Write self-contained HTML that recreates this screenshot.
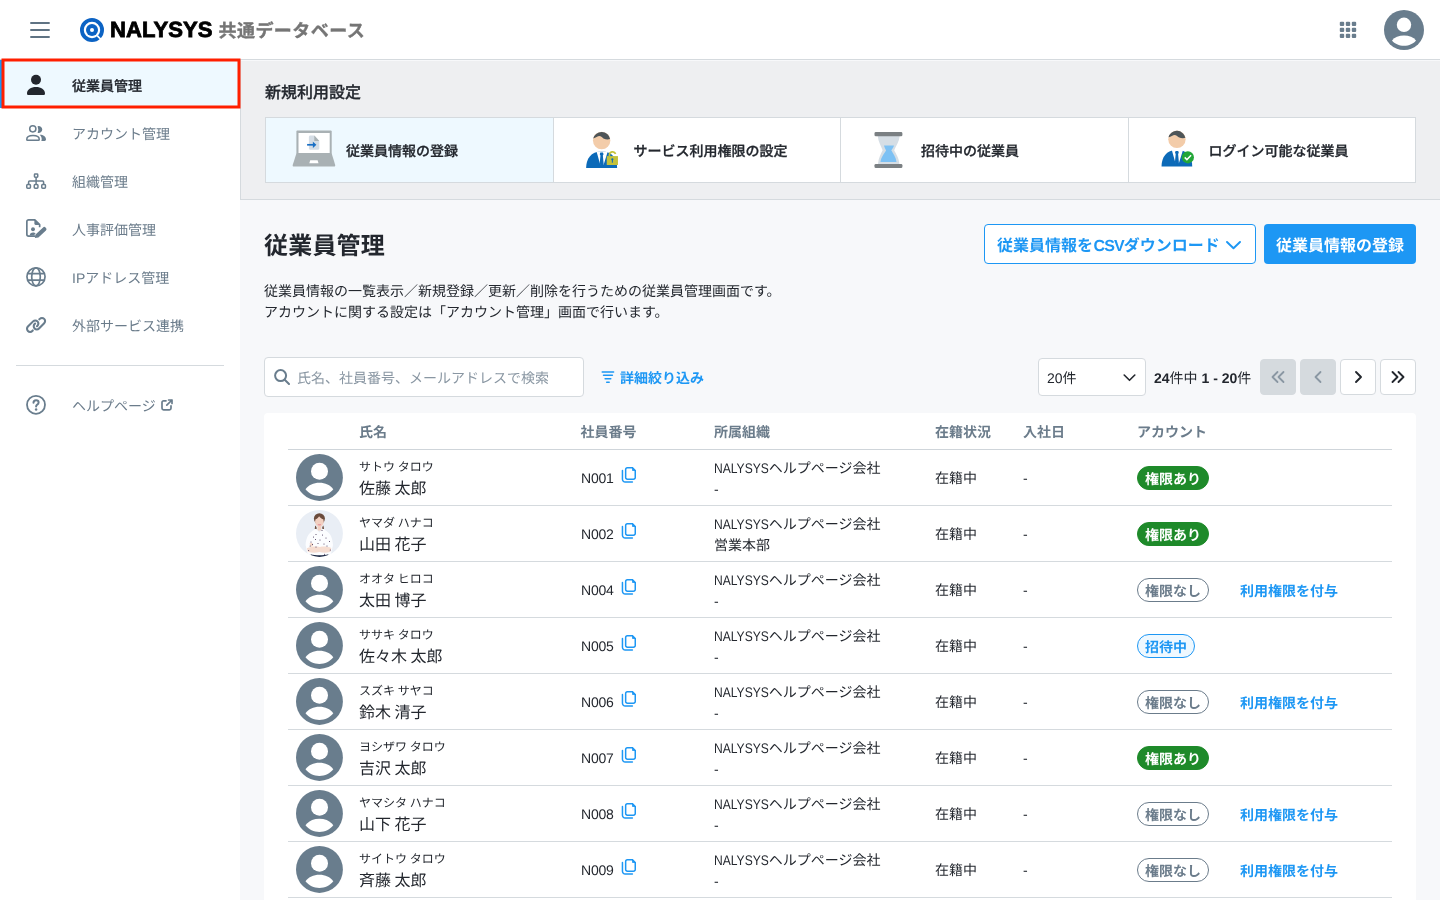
<!DOCTYPE html>
<html lang="ja">
<head>
<meta charset="utf-8">
<title>NALYSYS 共通データベース - 従業員管理</title>
<style>
*{box-sizing:border-box;margin:0;padding:0}
html,body{width:1440px;height:900px;overflow:hidden;background:#f7f8fa}
body{font-family:"Liberation Sans","Noto Sans CJK JP",sans-serif;font-size:14px;line-height:21px;color:#23272e;position:relative;-webkit-font-smoothing:antialiased;text-rendering:geometricPrecision}
a{text-decoration:none;color:inherit}
svg{display:block}
/* header */
#hdr,#side,#main{will-change:transform}
#hdr{position:absolute;left:0;top:0;width:1440px;height:60px;background:#fff;border-bottom:1px solid #d5dade;z-index:3}
#burger{position:absolute;left:30px;top:22px;width:20px;height:16px}
#logo{position:absolute;left:80px;top:18px;width:24px;height:24px}
#brand{position:absolute;left:110px;top:0;height:60px;line-height:60px;font-weight:700;font-size:22px;color:#000;white-space:nowrap;-webkit-text-stroke:.8px #000;transform:scaleX(1.005);transform-origin:0 50%}
#prod{position:absolute;left:218.5px;top:2px;height:59px;line-height:59px;font-weight:700;font-size:18px;color:#757575;white-space:nowrap;letter-spacing:.45px;-webkit-text-stroke:.35px #757575}
#apps{position:absolute;left:1339px;top:21px;width:18px;height:18px}
#me{position:absolute;left:1384px;top:10px;width:40px;height:40px}
/* sidebar */
#side{position:absolute;left:0;top:60px;width:240px;height:840px;background:#fff;z-index:2}
.nav{position:absolute;left:0;width:240px;height:48px;color:#6b7c8b}
.nav .ic{position:absolute;left:24px;top:12px;width:24px;height:24px}
.nav .tx{position:absolute;left:72px;top:2px;line-height:48px;font-size:14px;white-space:nowrap}
.nav .ext{position:absolute;left:161px;top:19px;width:12px;height:12px}
.nav.on{background:#eef9ff;color:#23272e}
.nav.on .tx{font-weight:500;-webkit-text-stroke:.3px #23272e}
.nav.on:before{content:"";position:absolute;left:0;top:0;width:3px;height:48px;background:#1d97f4}
#hl{position:absolute;left:0;top:56px;width:246px;height:56px;z-index:6;pointer-events:none}
#sep{position:absolute;left:16px;top:305px;width:208px;height:1px;background:#d5dade}
/* main */
#main{position:absolute;left:240px;top:60px;width:1200px;height:840px;background:#f7f8fa}
#wrap{position:absolute;left:1px;top:0;width:1199px;height:840px}

#sec{position:absolute;left:0;top:0;width:1200px;height:140px;background:#eeeff1;border-bottom:1px solid #d5dade;border-left:1px solid #d5dade;box-shadow:inset 0 1px 0 #f7f8fa}
#sec h2{position:absolute;left:24px;top:22px;font-size:16px;line-height:24px;font-weight:500;color:#23272e;-webkit-text-stroke:.3px #23272e}
#cards{position:absolute;left:24px;top:57px;width:1151px;height:66px;border:1px solid #d5dade;background:#fff;display:flex}
.card{flex:1 1 0;height:64px;border-left:1px solid #d5dade;position:relative;background:#fff}
.card:first-child{border-left:0;background:#eef9ff}
.card .ci{position:absolute;left:0;top:0;width:80px;height:64px}
.card .ct{position:absolute;left:80px;top:1px;line-height:64px;font-size:14px;font-weight:500;white-space:nowrap;color:#23272e;-webkit-text-stroke:.3px #23272e}
h1{position:absolute;left:23px;top:169px;font-size:24px;line-height:36px;font-weight:700;letter-spacing:.2px;color:#23272e;white-space:nowrap}
.btn{position:absolute;top:164px;height:40px;border-radius:4px;font-size:16px;font-weight:700;line-height:38px;white-space:nowrap;text-align:center;padding-top:3px}
#b1{left:743px;width:272px;border:1px solid #1d97f4;background:#fff;color:#1d97f4;text-align:left;padding-left:12px}
#b1 svg{position:absolute;left:240.800px;top:16.300px;width:16px;height:10px}
#b2{left:1023px;width:152px;background:#1d97f4;color:#fff;line-height:40px}
#desc{position:absolute;left:23px;top:221px;font-size:14px;line-height:21px;color:#23272e;white-space:nowrap}
#search{position:absolute;left:23px;top:297px;width:320px;height:40px;border:1px solid #d5dade;border-radius:4px;background:#fff}
#search svg{position:absolute;left:9.300px;top:11.300px;width:16px;height:16px}
#search span{position:absolute;left:32px;top:1px;line-height:38px;font-size:14px;color:#8a97a3;white-space:nowrap}
#filter{position:absolute;left:360px;top:298px;height:40px;line-height:40px;font-size:14px;font-weight:700;color:#1d97f4;white-space:nowrap;padding-left:19px}
#filter svg{position:absolute;left:0;top:13px;width:14px;height:12px;overflow:visible}
#sel{position:absolute;left:797px;top:298px;width:108px;height:38px;border:1px solid #d5dade;border-radius:4px;background:#fff;font-size:14px;line-height:36px;padding-left:8px;padding-top:1px}
#sel svg{position:absolute;left:84px;top:15px;width:13px;height:8px}
#cnt{position:absolute;left:913px;top:298px;height:40px;line-height:40px;font-size:14px;white-space:nowrap;color:#23272e}
#cnt b{font-weight:700}
.pg{position:absolute;top:299px;width:36px;height:36px;border-radius:4px;border:1px solid #d5dade;background:#fff}
.pg.dis{background:#d5dade;border-color:#d5dade}
.pg svg{position:absolute;left:9px;top:9px;width:16px;height:16px}
#tbl{position:absolute;left:23px;top:353px;width:1152px;height:520px;background:#fff;border-radius:4px}
.th{position:absolute;top:1px;height:36px;line-height:37px;font-size:14px;font-weight:700;color:#6b7c8b;white-space:nowrap}
#thl{position:absolute;left:24px;top:36px;width:1104px;height:1px;background:#cfd5da}
.tr{position:absolute;left:24px;width:1104px;height:56px;border-bottom:1px solid #d5dade}
.tr>*{position:absolute;white-space:nowrap}
.av{left:8px;top:4px;width:48px;height:48px}
.kn{left:71px;top:8px;font-size:12px;line-height:18px;word-spacing:-.6px}
.nm{left:71px;top:28px;font-size:16px;line-height:24px;word-spacing:-.9px}
.no{left:293px;top:18px;font-size:14px;line-height:21px;letter-spacing:-.2px}
.cp{left:332px;top:17px;width:16px;height:18px}
.og{left:426px;top:8px;font-size:14px;line-height:21px}
.la{display:inline-block;transform:scaleX(.862);transform-origin:0 50%;margin-right:-8.800px}
.st{left:647px;top:18px;font-size:14px;line-height:21px}
.dt{left:735px;top:18px;font-size:14px;line-height:21px}
.bd{left:849px;top:16px;height:24px;border-radius:12px;font-size:14px;font-weight:700;line-height:24px;padding:0 7px;border:1px solid}
.bd.ok{background:#1e8a2a;border-color:#1e8a2a;color:#fff}
.bd.ng{background:#fff;border-color:#6b7c8b;color:#6b7c8b}
.bd.iv{background:#eef8ff;border-color:#1d97f4;color:#1d97f4}
.lk{left:952px;top:19px;font-size:14px;line-height:21px;font-weight:700;color:#1d97f4}
</style>
</head>
<body>
<div id="hdr">
  <svg id="burger" viewBox="0 0 20 16"><path d="M1 1h18M1 8h18M1 15h18" stroke="#5f7383" stroke-width="1.900" stroke-linecap="round" fill="none"/></svg>
  <svg id="logo" viewBox="0 0 24 24"><circle cx="12" cy="12" r="10.100" fill="none" stroke="#0c63c4" stroke-width="3.800"/><circle cx="12" cy="12" r="6" fill="#0c63c4"/><circle cx="12" cy="12" r="2" fill="#fff"/><path d="M17.400 17.900l4.600 4.600" stroke="#fff" stroke-width="1.700" fill="none"/></svg>
  <div id="brand">NALYSYS</div>
  <div id="prod">共通データベース</div>
  <svg id="apps" viewBox="0 0 18 18" fill="#697d8d"><rect x="0.8" y="0.7" width="4.400" height="4.400" rx="1.100"/><rect x="6.8" y="0.7" width="4.400" height="4.400" rx="1.100"/><rect x="12.8" y="0.7" width="4.400" height="4.400" rx="1.100"/><rect x="0.8" y="6.7" width="4.400" height="4.400" rx="1.100"/><rect x="6.8" y="6.7" width="4.400" height="4.400" rx="1.100"/><rect x="12.8" y="6.7" width="4.400" height="4.400" rx="1.100"/><rect x="0.8" y="12.7" width="4.400" height="4.400" rx="1.100"/><rect x="6.8" y="12.7" width="4.400" height="4.400" rx="1.100"/><rect x="12.8" y="12.7" width="4.400" height="4.400" rx="1.100"/></svg>
  <svg id="me" viewBox="0 0 40 40"><circle cx="20" cy="20" r="20" fill="#697d8d"/><circle cx="20" cy="14.8" r="7.2" fill="#fff"/><path d="M8 30.5c2.5-3.2 7-5 12-5s9.500 1.800 12 5c-2.500 3.200-7 5.300-12 5.300s-9.500-2.100-12-5.300z" fill="#fff"/></svg>
</div>
<div id="side">
  <div class="nav on" style="top:0"><svg class="ic" viewBox="0 0 24 24" fill="#23272e"><circle cx="12" cy="7.800" r="5"/><path d="M3 21.400c0-3.900 4-6.400 9-6.400s9 2.500 9 6.400c0 .9-.7 1.600-1.600 1.600h-14.800c-.9 0-1.600-.7-1.600-1.600z"/></svg><div class="tx">従業員管理</div></div>
  <div class="nav" style="top:48px"><svg class="ic" viewBox="0 0 24 24"><circle cx="8.800" cy="8.800" r="3.100" fill="none" stroke="#697d8d" stroke-width="1.500"/><path d="M2.750 19.400c0-2.300 2.700-3.850 6.250-3.850s6.250 1.550 6.250 3.850c0 .5-.4.850-.85.850h-10.800c-.45 0-.85-.35-.85-.85z" fill="none" stroke="#697d8d" stroke-width="1.500"/><path d="M13.600 6.200a3.500 3.500 0 1 1 0 6.600a9 9 0 0 0 0-6.600z" fill="#697d8d"/><path d="M15.800 14.800c3.500 0 6.200 2 6.200 4.800 0 .8-.6 1.400-1.400 1.400h-3.300c.3-.6.400-1.200.4-1.900 0-1.700-.8-3.200-1.900-4.300z" fill="#697d8d"/></svg><div class="tx">アカウント管理</div></div>
  <div class="nav" style="top:96px"><svg class="ic" viewBox="0 0 24 24" fill="none" stroke="#697d8d" stroke-width="1.500"><rect x="10.450" y="5.950" width="3.300" height="3.300" rx=".7"/><path d="M12.100 9.300v7M4.600 16.300v-2.300c0-.6.400-1 1-1h13c.6 0 1 .4 1 1v2.300"/><rect x="2.750" y="16.550" width="3.700" height="3.700" rx=".9"/><rect x="10.250" y="16.550" width="3.700" height="3.700" rx=".9"/><rect x="17.750" y="16.550" width="3.700" height="3.700" rx=".9"/></svg><div class="tx">組織管理</div></div>
  <div class="nav" style="top:144px"><svg class="ic" viewBox="0 0 24 24"><path d="M11.500 20.150h-6.850a1.800 1.800 0 0 1-1.800-1.800v-12.700a1.800 1.800 0 0 1 1.800-1.800h6.200l4.800 4.850v2.600" fill="none" stroke="#697d8d" stroke-width="1.700" stroke-linejoin="round"/><path d="M10.400 3.400v4.100a1.600 1.600 0 0 0 1.600 1.600h4.100z" fill="#697d8d"/><circle cx="9" cy="13.300" r="1.950" fill="#697d8d"/><path d="M5.700 19.500c0-1.900 1.400-3.100 3.300-3.100 1.100 0 2.100.4 2.700 1.100l-2 2z" fill="#697d8d"/><g transform="rotate(-43 16.700 16.500)"><path d="M11.600 14.400h10.300a1.700 1.700 0 0 1 1.700 1.700v.8a1.700 1.700 0 0 1-1.700 1.700h-10.300l-2.900-2.100z" fill="#697d8d"/></g></svg><div class="tx">人事評価管理</div></div>
  <div class="nav" style="top:192px"><svg class="ic" viewBox="0 0 24 24" fill="none" stroke="#697d8d" stroke-width="1.700"><circle cx="12" cy="12.850" r="9.050"/><ellipse cx="12" cy="12.850" rx="4.300" ry="9.050"/><path d="M3.500 9.600h17M3.500 16.100h17"/></svg><div class="tx">IPアドレス管理</div></div>
  <div class="nav" style="top:240px"><svg class="ic" viewBox="0 0 24 24" fill="none" stroke="#697d8d" stroke-width="2.100" stroke-linecap="round"><path transform="translate(8.700 14.150) rotate(-45)" d="M-3 3.100h-.65a3.100 3.100 0 0 1 0-6.200h7.300a3.100 3.100 0 0 1 0 6.200h-.7"/><path transform="translate(15.400 11.650) rotate(-45)" d="M3-3.100h.65a3.100 3.100 0 0 1 0 6.200h-7.300a3.100 3.100 0 0 1 0-6.200h.7"/></svg><div class="tx">外部サービス連携</div></div>
  <div id="sep"></div>
  <div class="nav" style="top:320px"><svg class="ic" viewBox="0 0 24 24"><circle cx="12" cy="12.850" r="9" fill="none" stroke="#697d8d" stroke-width="1.800"/><path d="M9.500 10.800c0-1.500 1.100-2.500 2.600-2.500s2.500 1 2.500 2.300c0 1.100-.6 1.600-1.400 2.100-.8.500-1.100.9-1.100 1.800" fill="none" stroke="#697d8d" stroke-width="2" stroke-linecap="round"/><circle cx="12.100" cy="17.400" r="1.250" fill="#697d8d"/></svg><div class="tx">ヘルプページ</div><svg class="ext" viewBox="0 0 12 12" fill="none" stroke="#697d8d" stroke-width="1.700" stroke-linecap="round" stroke-linejoin="round"><path d="M5 1.800h-2.400c-.9 0-1.600.7-1.600 1.600v5.800c0 .9.700 1.600 1.600 1.600h5.800c.9 0 1.600-.7 1.600-1.600v-2.400M7.600 1h3.400v3.400M11 1l-5.200 5.200"/></svg></div>
</div>
<svg id="hl" viewBox="0 0 246 56"><rect x="3" y="4" width="236" height="47" fill="none" stroke="#ff1f00" stroke-width="3"/></svg>
<div id="main">
 <div id="sec">
  <h2>新規利用設定</h2>
  <div id="cards">
   <div class="card"><svg class="ci" viewBox="0 0 80 64"><rect x="30.400" y="12.400" width="35.300" height="24" rx="1" fill="#a9b1b4"/><rect x="32.500" y="15" width="31.200" height="20" fill="#fff"/><path d="M30.400 35.500h35.300l3.500 11.400c.2.900-.3 1.600-1.200 1.600h-40.100c-.9 0-1.400-.7-1.200-1.600z" fill="#a9b1b4"/><path d="M44.200 42.200h7.400l.9 3.100h-9.200z" fill="#fff"/><path d="M42.900 19.100c0-.9.600-1.500 1.500-1.500h3.900l5 5.400v7.200c0 .9-.6 1.500-1.500 1.500h-7.400c-.9 0-1.500-.6-1.500-1.500z" fill="#d5dde5"/><path d="M48.300 17.600l5 5.400h-5z" fill="#a9b1b4"/><path d="M41.100 26.800h7" stroke="#1a6fc4" stroke-width="1.700" fill="none"/><path d="M46.900 23.700l3.500 3.100-3.500 3.100z" fill="#1a6fc4"/></svg><div class="ct">従業員情報の登録</div></div>
   <div class="card"><svg class="ci" viewBox="0 0 80 64"><circle cx="47.65" cy="22.50" r="8.700" fill="#f3cca9"/><path d="M39.20 20.40 a8.700 8.700 0 0 1 16.900 .6c-1.600.6-4.200.7-6.700-.6-1.500-.8-2.500-2.300-4-2.300-1.900 0-3.500 1.700-6.200 2.300z" fill="#4e5558"/><path d="M32.15 50.00 c0-9 4.500-16.50 15.50-16.50 s15.50 7.500 15.50 16.50z" fill="#0c6ab8"/><path d="M42.55 33.50 h11.200l-4.100 13.300-1.700-2.300-1.700 2.300z" fill="#fff"/><path d="M46.35 34.40 h2.600l.6 1.800-.7 1.300.8 8.600-2 2.200-2-2.200.8-8.600-.7-1.300z" fill="#0c6ab8"/><path d="M55.400 38.600v-1.600a3.200 3.200 0 0 1 6.200-1.100" fill="none" stroke="#c3c13a" stroke-width="1.700"/><rect x="52.750" y="38.100" width="11.200" height="8.900" fill="#c3c13a"/><circle cx="58.350" cy="41.300" r="1.100" fill="#0c6ab8"/><rect x="57.850" y="41.300" width="1" height="3.400" fill="#0c6ab8"/></svg><div class="ct">サービス利用権限の設定</div></div>
   <div class="card"><svg class="ci" viewBox="0 0 80 64"><path d="M36.700 18h22c-.7 6-3.700 10-5.500 14.300 1.800 3.700 4.800 7.700 5.200 13.700h-21.400c.4-6 3-10 4.600-13.700-1.600-4.300-4.200-8.300-4.900-14.300z" fill="#d6dee5"/><path d="M43 27.400h10c-.5 2.100-2 3.600-2.700 4.900 1.700 3.200 4.700 6.700 5.200 11.700h-16c.5-5 4-8.500 5.600-11.700-.6-1.300-1.600-2.800-2.100-4.900z" fill="#7dc1f4"/><rect x="33.500" y="14.100" width="27.900" height="4.100" rx="1.300" fill="#7b8083"/><rect x="33.500" y="45.900" width="27.900" height="4.100" rx="1.300" fill="#7b8083"/></svg><div class="ct">招待中の従業員</div></div>
   <div class="card"><svg class="ci" viewBox="0 0 80 64"><circle cx="47.95" cy="21.30" r="8.700" fill="#f3cca9"/><path d="M39.50 19.20 a8.700 8.700 0 0 1 16.900 .6c-1.600.6-4.200.7-6.700-.6-1.500-.8-2.500-2.300-4-2.300-1.900 0-3.500 1.700-6.200 2.300z" fill="#4e5558"/><path d="M32.55 48.50 c0-9 4.500-16.50 15.35-16.50 s15.35 7.500 15.35 16.50z" fill="#0c6ab8"/><path d="M42.80 32.00 h11.200l-4.100 13.300-1.700-2.300-1.700 2.300z" fill="#fff"/><path d="M46.60 32.90 h2.600l.6 1.800-.7 1.300.8 8.600-2 2.200-2-2.200.8-8.600-.7-1.300z" fill="#0c6ab8"/><circle cx="58.850" cy="39.300" r="6.100" fill="#23a638"/><path d="M55.700 39.400l2.200 2.200 4.200-4.300" fill="none" stroke="#fff" stroke-width="1.500"/></svg><div class="ct">ログイン可能な従業員</div></div>
  </div>
 </div>
 <div id="wrap">
 <h1>従業員管理</h1>
 <div class="btn" id="b1">従業員情報を<span style="letter-spacing:-.9px;margin-left:.5px">CSV</span>ダウンロード<svg viewBox="0 0 16 10"><path d="M1 1l6.500 6.300 6.500-6.300" fill="none" stroke="#1d97f4" stroke-width="1.900" stroke-linecap="round" stroke-linejoin="round"/></svg></div>
 <div class="btn" id="b2">従業員情報の登録</div>
 <div id="desc">従業員情報の一覧表示／新規登録／更新／削除を行うための従業員管理画面です。<br>アカウントに関する設定は「アカウント管理」画面で行います。</div>
 <div id="search"><svg viewBox="0 0 16 16"><circle cx="6.600" cy="6.600" r="5.500" fill="none" stroke="#697d8d" stroke-width="2"/><path d="M10.700 10.700l4.300 4.300" stroke="#697d8d" stroke-width="2" stroke-linecap="round"/></svg><span>氏名、社員番号、メールアドレスで検索</span></div>
 <div id="filter"><svg viewBox="0 0 14 12"><path d="M1.200 .9h11.400M2.500 4.300h8.900M4.100 7.800h5.700M5.700 11.200h2.500" stroke="#1d97f4" stroke-width="1.500" stroke-linecap="round" fill="none"/></svg>詳細絞り込み</div>
 <div id="sel">20件<svg viewBox="0 0 13 8"><path d="M1.200 1l5.300 5.300 5.300-5.300" fill="none" stroke="#23272e" stroke-width="1.600" stroke-linecap="round" stroke-linejoin="round"/></svg></div>
 <div id="cnt"><b>24</b>件中 <b>1 - 20</b>件</div>
 <div class="pg dis" style="left:1019px"><svg viewBox="0 0 16 16"><path d="M7.500 3l-5 5 5 5M13.500 3l-5 5 5 5" fill="none" stroke="#8a97a3" stroke-width="1.800" stroke-linecap="round" stroke-linejoin="round"/></svg></div>
 <div class="pg dis" style="left:1059px"><svg viewBox="0 0 16 16"><path d="M10.500 3l-5 5 5 5" fill="none" stroke="#8a97a3" stroke-width="1.800" stroke-linecap="round" stroke-linejoin="round"/></svg></div>
 <div class="pg" style="left:1099px"><svg viewBox="0 0 16 16"><path d="M6 3l5 5-5 5" fill="none" stroke="#23272e" stroke-width="1.900" stroke-linecap="round" stroke-linejoin="round"/></svg></div>
 <div class="pg" style="left:1139px"><svg viewBox="0 0 16 16"><path d="M2.500 3l5 5-5 5M8.500 3l5 5-5 5" fill="none" stroke="#23272e" stroke-width="1.900" stroke-linecap="round" stroke-linejoin="round"/></svg></div>
 <div id="tbl">
  <div class="th" style="left:95px">氏名</div><div class="th" style="left:316.400px">社員番号</div><div class="th" style="left:450px">所属組織</div><div class="th" style="left:671px">在籍状況</div><div class="th" style="left:759px">入社日</div><div class="th" style="left:873px">アカウント</div>
  <div id="thl"></div>
  <div class="tr" style="top:37px"><svg class="av" viewBox="0 0 48 48"><circle cx="23.450" cy="23.450" r="23.450" fill="#697d8d"/><circle cx="23.500" cy="17.300" r="8.500" fill="#fff"/><path d="M9.500 35.300c3-4.300 8-6.500 13.900-6.500s10.900 2.200 13.900 6.500c-3.300 4.200-8.300 6.700-13.900 6.700s-10.600-2.500-13.900-6.700z" fill="#fff"/></svg><div class="kn">サトウ タロウ</div><div class="nm">佐藤 太郎</div><div class="no">N001</div><svg class="cp" viewBox="-.2 .7 16 18" fill="none" stroke="#1d97f4" stroke-width="1.500"><path d="M7.200 1.450h5.100l2.750 2.750v6.900a1.750 1.750 0 0 1-1.750 1.750h-6.100a1.750 1.750 0 0 1-1.750-1.750v-7.900a1.750 1.750 0 0 1 1.750-1.750z"/><path d="M12.300 1.600v2.600h2.600z" fill="#1d97f4" stroke-width=".8"/><path d="M2.250 4.300v8.700a2.750 2.750 0 0 0 2.750 2.750h7.200" stroke-linecap="round"/></svg><div class="og"><span class="la">NALYSYS</span>ヘルプページ会社<br>-</div><div class="st">在籍中</div><div class="dt">-</div><div class="bd ok">権限あり</div></div>
  <div class="tr" style="top:93px"><svg class="av" viewBox="0 0 48 48"><defs><clipPath id="avc"><circle cx="23.450" cy="23.450" r="23.450"/></clipPath></defs><g clip-path="url(#avc)"><rect width="48" height="48" fill="#e9eef5"/><ellipse cx="23.400" cy="8.600" rx="5.500" ry="5.400" fill="#6a4b3c"/><path d="M19.200 15.500c1 .9 2 2.600 1.300 3.900l-1.800-.3zM27.400 15.500c-1 .9-1.600 2.600-.9 3.700l1.600-.5z" fill="#6a4b3c"/><ellipse cx="23.400" cy="11.400" rx="4.300" ry="5.300" fill="#f2d0c1"/><path d="M19.300 9.500c1.500-.5 3-1.800 3.800-3.200 1 1.600 2.800 2.800 4.500 3.200-.3-3-1.800-5-4.200-5s-4 2-4.100 5z" fill="#6a4b3c"/><path d="M22 14.300h2.800c.5 0 .5 1.600-1.400 1.600s-1.900-1.600-1.400-1.600z" fill="#e58a98"/><rect x="21.600" y="15.500" width="3.600" height="5" fill="#f2d0c1"/><path d="M9.600 35c.5-7 2.500-10.500 5.500-13 1.500-1.300 3-2.500 5-3.200l3.300 3.700 3.300-3.700c2 .7 3.500 1.900 5 3.200 3 2.500 4.800 6 5.300 13l-2 8.700c-5 2.500-18.500 2.500-23.500 0z" fill="#fcfdff"/><path d="M10.800 38.200c4-1.900 9-2.200 13-1.300 4-.9 8-.5 11.500 1l-.8 3.800c-3.600 1.200-7.600 1.200-11 .3-3.700.9-8 .9-11.700-.3z" fill="#f6ddd1"/><path d="M13.500 33.500c1.500-1 3.300-.6 3.600.9.300 1.400-1 2.400-2.600 2.200z" fill="#f4d6c8"/><path d="M14.500 44.200c5 1.500 13 1.500 18 0l-1.200 2.400c-4.500 1.100-11 1.100-15.500 0z" fill="#1f2a44"/><g fill="#4a3a5c"><circle cx="15" cy="32" r=".55"/><circle cx="17.5" cy="27" r=".55"/><circle cx="20" cy="24.5" r=".55"/><circle cx="26.5" cy="25" r=".55"/><circle cx="30" cy="28" r=".55"/><circle cx="33.5" cy="31.5" r=".55"/><circle cx="28" cy="34" r=".55"/><circle cx="22" cy="33.5" r=".55"/><circle cx="14.2" cy="36" r=".55"/><circle cx="31" cy="36" r=".55"/><circle cx="20" cy="37" r=".55"/><circle cx="24" cy="30" r=".55"/><circle cx="28.5" cy="44.3" r=".55"/><circle cx="34.3" cy="40" r=".55"/><circle cx="12.6" cy="40.5" r=".55"/><circle cx="16.5" cy="34.5" r=".55"/><circle cx="26" cy="20.5" r=".55"/><circle cx="19.5" cy="29.5" r=".55"/></g></g></svg><div class="kn">ヤマダ ハナコ</div><div class="nm">山田 花子</div><div class="no">N002</div><svg class="cp" viewBox="-.2 .7 16 18" fill="none" stroke="#1d97f4" stroke-width="1.500"><path d="M7.200 1.450h5.100l2.750 2.750v6.900a1.750 1.750 0 0 1-1.750 1.750h-6.100a1.750 1.750 0 0 1-1.750-1.750v-7.900a1.750 1.750 0 0 1 1.750-1.750z"/><path d="M12.300 1.600v2.600h2.600z" fill="#1d97f4" stroke-width=".8"/><path d="M2.250 4.300v8.700a2.750 2.750 0 0 0 2.750 2.750h7.200" stroke-linecap="round"/></svg><div class="og"><span class="la">NALYSYS</span>ヘルプページ会社<br>営業本部</div><div class="st">在籍中</div><div class="dt">-</div><div class="bd ok">権限あり</div></div>
  <div class="tr" style="top:149px"><svg class="av" viewBox="0 0 48 48"><circle cx="23.450" cy="23.450" r="23.450" fill="#697d8d"/><circle cx="23.500" cy="17.300" r="8.500" fill="#fff"/><path d="M9.500 35.300c3-4.300 8-6.500 13.900-6.500s10.900 2.200 13.900 6.500c-3.300 4.200-8.300 6.700-13.900 6.700s-10.600-2.500-13.900-6.700z" fill="#fff"/></svg><div class="kn">オオタ ヒロコ</div><div class="nm">太田 博子</div><div class="no">N004</div><svg class="cp" viewBox="-.2 .7 16 18" fill="none" stroke="#1d97f4" stroke-width="1.500"><path d="M7.200 1.450h5.100l2.750 2.750v6.900a1.750 1.750 0 0 1-1.750 1.750h-6.100a1.750 1.750 0 0 1-1.750-1.750v-7.900a1.750 1.750 0 0 1 1.750-1.750z"/><path d="M12.300 1.600v2.600h2.600z" fill="#1d97f4" stroke-width=".8"/><path d="M2.250 4.300v8.700a2.750 2.750 0 0 0 2.750 2.750h7.200" stroke-linecap="round"/></svg><div class="og"><span class="la">NALYSYS</span>ヘルプページ会社<br>-</div><div class="st">在籍中</div><div class="dt">-</div><div class="bd ng">権限なし</div><a class="lk">利用権限を付与</a></div>
  <div class="tr" style="top:205px"><svg class="av" viewBox="0 0 48 48"><circle cx="23.450" cy="23.450" r="23.450" fill="#697d8d"/><circle cx="23.500" cy="17.300" r="8.500" fill="#fff"/><path d="M9.500 35.300c3-4.300 8-6.500 13.900-6.500s10.900 2.200 13.900 6.500c-3.300 4.200-8.300 6.700-13.900 6.700s-10.600-2.500-13.900-6.700z" fill="#fff"/></svg><div class="kn">ササキ タロウ</div><div class="nm">佐々木 太郎</div><div class="no">N005</div><svg class="cp" viewBox="-.2 .7 16 18" fill="none" stroke="#1d97f4" stroke-width="1.500"><path d="M7.200 1.450h5.100l2.750 2.750v6.900a1.750 1.750 0 0 1-1.750 1.750h-6.100a1.750 1.750 0 0 1-1.750-1.750v-7.900a1.750 1.750 0 0 1 1.750-1.750z"/><path d="M12.300 1.600v2.600h2.600z" fill="#1d97f4" stroke-width=".8"/><path d="M2.250 4.300v8.700a2.750 2.750 0 0 0 2.750 2.750h7.200" stroke-linecap="round"/></svg><div class="og"><span class="la">NALYSYS</span>ヘルプページ会社<br>-</div><div class="st">在籍中</div><div class="dt">-</div><div class="bd iv">招待中</div></div>
  <div class="tr" style="top:261px"><svg class="av" viewBox="0 0 48 48"><circle cx="23.450" cy="23.450" r="23.450" fill="#697d8d"/><circle cx="23.500" cy="17.300" r="8.500" fill="#fff"/><path d="M9.500 35.300c3-4.300 8-6.500 13.900-6.500s10.900 2.200 13.900 6.500c-3.300 4.200-8.300 6.700-13.900 6.700s-10.600-2.500-13.900-6.700z" fill="#fff"/></svg><div class="kn">スズキ サヤコ</div><div class="nm">鈴木 清子</div><div class="no">N006</div><svg class="cp" viewBox="-.2 .7 16 18" fill="none" stroke="#1d97f4" stroke-width="1.500"><path d="M7.200 1.450h5.100l2.750 2.750v6.900a1.750 1.750 0 0 1-1.750 1.750h-6.100a1.750 1.750 0 0 1-1.750-1.750v-7.900a1.750 1.750 0 0 1 1.750-1.750z"/><path d="M12.300 1.600v2.600h2.600z" fill="#1d97f4" stroke-width=".8"/><path d="M2.250 4.300v8.700a2.750 2.750 0 0 0 2.750 2.750h7.200" stroke-linecap="round"/></svg><div class="og"><span class="la">NALYSYS</span>ヘルプページ会社<br>-</div><div class="st">在籍中</div><div class="dt">-</div><div class="bd ng">権限なし</div><a class="lk">利用権限を付与</a></div>
  <div class="tr" style="top:317px"><svg class="av" viewBox="0 0 48 48"><circle cx="23.450" cy="23.450" r="23.450" fill="#697d8d"/><circle cx="23.500" cy="17.300" r="8.500" fill="#fff"/><path d="M9.500 35.300c3-4.300 8-6.500 13.900-6.500s10.900 2.200 13.900 6.500c-3.300 4.200-8.300 6.700-13.900 6.700s-10.600-2.500-13.900-6.700z" fill="#fff"/></svg><div class="kn">ヨシザワ タロウ</div><div class="nm">吉沢 太郎</div><div class="no">N007</div><svg class="cp" viewBox="-.2 .7 16 18" fill="none" stroke="#1d97f4" stroke-width="1.500"><path d="M7.200 1.450h5.100l2.750 2.750v6.900a1.750 1.750 0 0 1-1.750 1.750h-6.100a1.750 1.750 0 0 1-1.750-1.750v-7.900a1.750 1.750 0 0 1 1.750-1.750z"/><path d="M12.300 1.600v2.600h2.600z" fill="#1d97f4" stroke-width=".8"/><path d="M2.250 4.300v8.700a2.750 2.750 0 0 0 2.750 2.750h7.200" stroke-linecap="round"/></svg><div class="og"><span class="la">NALYSYS</span>ヘルプページ会社<br>-</div><div class="st">在籍中</div><div class="dt">-</div><div class="bd ok">権限あり</div></div>
  <div class="tr" style="top:373px"><svg class="av" viewBox="0 0 48 48"><circle cx="23.450" cy="23.450" r="23.450" fill="#697d8d"/><circle cx="23.500" cy="17.300" r="8.500" fill="#fff"/><path d="M9.500 35.300c3-4.300 8-6.500 13.900-6.500s10.900 2.200 13.900 6.500c-3.300 4.200-8.300 6.700-13.900 6.700s-10.600-2.500-13.900-6.700z" fill="#fff"/></svg><div class="kn">ヤマシタ ハナコ</div><div class="nm">山下 花子</div><div class="no">N008</div><svg class="cp" viewBox="-.2 .7 16 18" fill="none" stroke="#1d97f4" stroke-width="1.500"><path d="M7.200 1.450h5.100l2.750 2.750v6.900a1.750 1.750 0 0 1-1.750 1.750h-6.100a1.750 1.750 0 0 1-1.750-1.750v-7.900a1.750 1.750 0 0 1 1.750-1.750z"/><path d="M12.300 1.600v2.600h2.600z" fill="#1d97f4" stroke-width=".8"/><path d="M2.250 4.300v8.700a2.750 2.750 0 0 0 2.750 2.750h7.200" stroke-linecap="round"/></svg><div class="og"><span class="la">NALYSYS</span>ヘルプページ会社<br>-</div><div class="st">在籍中</div><div class="dt">-</div><div class="bd ng">権限なし</div><a class="lk">利用権限を付与</a></div>
  <div class="tr" style="top:429px"><svg class="av" viewBox="0 0 48 48"><circle cx="23.450" cy="23.450" r="23.450" fill="#697d8d"/><circle cx="23.500" cy="17.300" r="8.500" fill="#fff"/><path d="M9.500 35.300c3-4.300 8-6.500 13.900-6.500s10.900 2.200 13.900 6.500c-3.300 4.200-8.300 6.700-13.900 6.700s-10.600-2.500-13.900-6.700z" fill="#fff"/></svg><div class="kn">サイトウ タロウ</div><div class="nm">斉藤 太郎</div><div class="no">N009</div><svg class="cp" viewBox="-.2 .7 16 18" fill="none" stroke="#1d97f4" stroke-width="1.500"><path d="M7.200 1.450h5.100l2.750 2.750v6.900a1.750 1.750 0 0 1-1.750 1.750h-6.100a1.750 1.750 0 0 1-1.750-1.750v-7.900a1.750 1.750 0 0 1 1.750-1.750z"/><path d="M12.300 1.600v2.600h2.600z" fill="#1d97f4" stroke-width=".8"/><path d="M2.250 4.300v8.700a2.750 2.750 0 0 0 2.750 2.750h7.200" stroke-linecap="round"/></svg><div class="og"><span class="la">NALYSYS</span>ヘルプページ会社<br>-</div><div class="st">在籍中</div><div class="dt">-</div><div class="bd ng">権限なし</div><a class="lk">利用権限を付与</a></div>
 </div>
</div>
</div>
</body>
</html>
